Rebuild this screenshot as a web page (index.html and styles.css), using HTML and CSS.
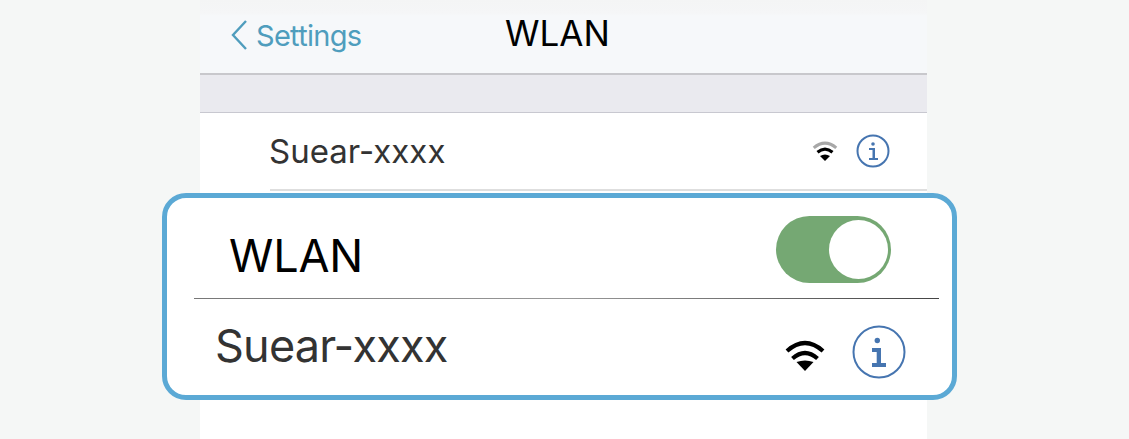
FILE: index.html
```html
<!DOCTYPE html>
<html lang="en">
<head>
<meta charset="utf-8">
<title>WLAN</title>
<link rel="stylesheet" href="styles.css">
</head>
<body>
<main class="phone">
  <header class="nav">
    <a class="back">
      <svg class="chevron" width="18" height="32" viewBox="0 0 18 32"><path d="M16 2 L3 16 L16 30" fill="none" stroke="#4f9dbd" stroke-width="2.4"/></svg>
      <span>Settings</span>
    </a>
    <h1 class="nav-title">WLAN</h1>
  </header>
  <div class="band"></div>
  <div class="net-row">
    <span class="net-name">Suear-xxxx</span>
    <svg class="wifi-small" width="26" height="20" viewBox="0 0 40 32">
      <path d="M2 11 Q20 -4 38 11" fill="none" stroke="#a8a8a8" stroke-width="5"/>
      <path d="M8 18 Q20 8 32 18" fill="none" stroke="#000" stroke-width="5"/>
      <path d="M12 24 L20 32 L28 24 Q20 19 12 24 Z" fill="#000"/>
    </svg>
    <svg class="info-small" width="34" height="34" viewBox="0 0 34 34">
      <circle cx="17" cy="17" r="15.5" fill="none" stroke="#4675b0" stroke-width="2"/>
      <circle cx="17" cy="10" r="1.800" fill="#4675b0"/>
      <path d="M13 14 H19 V24 H22 V26 H13 V24 H16.500 V16 H13 Z" fill="#4675b0"/>
    </svg>
  </div>
</main>
<section class="callout">
  <div class="callout-row callout-top">
    <span class="callout-title">WLAN</span>
    <span class="toggle"><span class="knob"></span></span>
  </div>
  <div class="divider"></div>
  <div class="callout-row callout-bottom">
    <span class="callout-name">Suear-xxxx</span>
    <svg class="wifi-big" width="40" height="33" viewBox="0 0 40 33">
      <path d="M2 13 Q20 -3 38 13" fill="none" stroke="#000" stroke-width="4.200"/>
      <path d="M7.5 20.500 Q20 9.500 32.500 20.500" fill="none" stroke="#000" stroke-width="4.200"/>
      <path d="M11.500 24 Q20 21 28.500 24 L20 33 Z" fill="#000"/>
    </svg>
    <svg class="info-big" width="54" height="54" viewBox="0 0 54 54">
      <circle cx="27" cy="27" r="25.500" fill="none" stroke="#4675b0" stroke-width="2"/>
      <circle cx="25.300" cy="15.500" r="2.700" fill="#4675b0"/>
      <path d="M20 23 H29 V38 H34 V42 H20 V38 H24.700 V27 H20 Z" fill="#4675b0"/>
    </svg>
  </div>
</section>
</body>
</html>
```
FILE: styles.css
```css
* { box-sizing: border-box; }
html, body { margin: 0; height: 100%; }
body {
  background: #f5f7f6;
  overflow: hidden;
  position: relative;
  font-family: Inter, "Liberation Sans", sans-serif;
}
.phone {
  width: 727px;
  height: 439px;
  margin-left: 200px;
  background: #fff;
}
.nav {
  height: 75px;
  background: linear-gradient(180deg, #f4f5f5 0, #f5f6f7 13px, #f6f8fa 16px);
  border-bottom: 2px solid #c8c8cc;
  display: flex;
  align-items: center;
  position: relative;
}
.back {
  display: flex;
  align-items: center;
  gap: 8px;
  margin-left: 30px;
  color: #4f9dbd;
  font-size: 29px;
  letter-spacing: -0.7px;
  margin-top: -3px;
}
.nav-title {
  position: absolute;
  left: 305px;
  top: 12px;
  margin: 0;
  font-size: 35px;
  font-weight: 400;
  color: #000;
  line-height: 42px;
}
.band {
  height: 38px;
  background: #eaeaef;
  border-bottom: 1px solid #c8c8d0;
}
.net-row {
  height: 78px;
  margin-left: 70px;
  border-bottom: 2px solid #dedede;
  display: flex;
  align-items: center;
  padding-right: 37px;
}
.net-name {
  flex: 1;
  font-size: 33px;
  color: #333;
  margin-left: -1px;
}
.wifi-small { margin-right: 18px; }
.callout {
  position: absolute;
  left: 162px;
  top: 193px;
  width: 795px;
  height: 207px;
  background: #fff;
  border: 5px solid #5ba9d5;
  border-radius: 24px;
}
.callout-row { display: flex; align-items: center; }
.callout-top {
  height: 100px;
  padding-left: 62px;
  padding-right: 61px;
  justify-content: space-between;
}
.callout-title { font-size: 45px; color: #000; margin-top: 14px; letter-spacing: -0.2px; }
.toggle {
  width: 115px;
  height: 67px;
  border-radius: 34px;
  background: #75a873;
  display: flex;
  align-items: center;
  justify-content: flex-end;
  padding-right: 3px;
  margin-top: 3px;
}
.knob {
  width: 59px;
  height: 59px;
  border-radius: 50%;
  background: #fff;
}
.divider {
  height: 1px;
  margin: 0 13px 0 27px;
  background: linear-gradient(90deg, #777, #999 50%, #444);
}
.callout-bottom {
  height: 96px;
  padding-left: 48px;
  padding-right: 46px;
}
.callout-name { flex: 1; font-size: 45px; letter-spacing: -0.8px; color: #333; margin-top: -3px; }
.wifi-big { margin-right: 27px; margin-top: 14px; }
.info-big { margin-top: 10px; }
```
